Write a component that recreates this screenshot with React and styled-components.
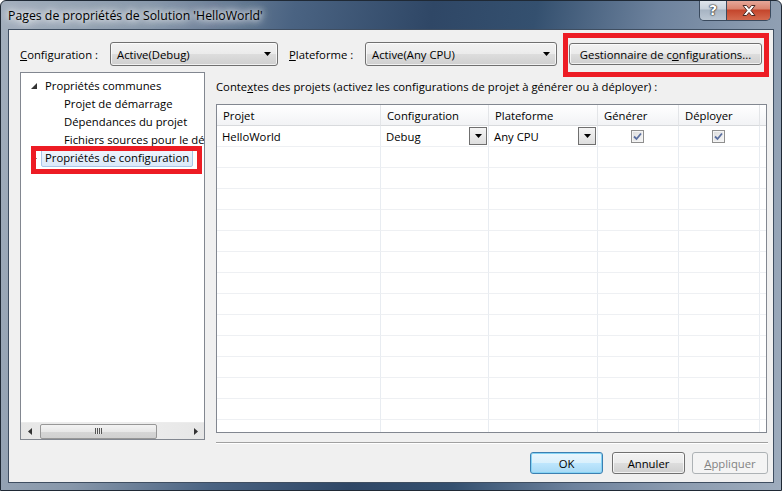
import React from "react";
import styled, { createGlobalStyle } from "styled-components";

const GlobalStyle = createGlobalStyle`
    html, body {
        margin: 0;
        padding: 0;
        background: #ffffff;
    }
    body {
        font-family: "Segoe UI", "Open Sans", "Noto Sans", sans-serif;
        font-size: 11.3px;
        color: #000;
    }
    * {
        box-sizing: border-box;
    }
`;

const rows = Array.from({ length: 15 });

function Caret() {
    return (
        <svg width="7" height="4" viewBox="0 0 7 4">
            <path d="M0 0 H7 L3.5 4 Z" fill="#000" />
        </svg>
    );
}

function Check() {
    return (
        <svg width="9" height="9" viewBox="0 0 9 9">
            <path
                d="M1 4.5 L3.5 7 L8 1.5"
                fill="none"
                stroke="#5b6fa0"
                strokeWidth="1.8"
            />
        </svg>
    );
}

function App() {
    return (
        <>
            <GlobalStyle />
            <Window>
                <TitleBar>
                    <TitleText>Pages de propriétés de Solution 'HelloWorld'</TitleText>
                    <CaptionButtons>
                        <HelpButton>?</HelpButton>
                        <CloseButton>
                            <svg width="14" height="11" viewBox="0 0 14 11">
                                <path
                                    d="M1 0.5 H4.5 L7 3.5 L9.5 0.5 H13 L9 5.5 L13 10.5 H9.5 L7 7.5 L4.5 10.5 H1 L5 5.5 Z"
                                    fill="#fff"
                                    stroke="#4a2a25"
                                    strokeWidth="1"
                                />
                            </svg>
                        </CloseButton>
                    </CaptionButtons>
                </TitleBar>
                <Client>
                    <TopRow>
                        <FieldLabel width={90}>
                            <u>C</u>onfiguration :
                        </FieldLabel>
                        <Combo width={168}>
                            <span>Active(Debug)</span>
                            <Caret />
                        </Combo>
                        <FieldLabel width={76} style={{ marginLeft: 11 }}>
                            <u>P</u>lateforme :
                        </FieldLabel>
                        <Combo width={192}>
                            <span>Active(Any CPU)</span>
                            <Caret />
                        </Combo>
                        <Marked>
                            <PushButton width={193}>
                                Gestionnaire de c<u>o</u>nfigurations...
                            </PushButton>
                            <RedBox $t={-10} $r={-7} $b={-12} $l={-6} />
                        </Marked>
                    </TopRow>
                    <Body>
                        <TreePanel>
                            <TreeList>
                                <TreeRow $indent={20}>
                                    <Expander>
                                        <svg width="6" height="6" viewBox="0 0 6 6">
                                            <path d="M6 0 V6 H0 Z" fill="#333" />
                                        </svg>
                                    </Expander>
                                    <TreeLabel>Propriétés communes</TreeLabel>
                                </TreeRow>
                                <TreeRow $indent={39}>
                                    <TreeLabel>Projet de démarrage</TreeLabel>
                                </TreeRow>
                                <TreeRow $indent={39}>
                                    <TreeLabel>Dépendances du projet</TreeLabel>
                                </TreeRow>
                                <TreeRow $indent={39}>
                                    <TreeLabel>Fichiers sources pour le débogage</TreeLabel>
                                </TreeRow>
                                <TreeRow $indent={20}>
                                    <Dot />
                                    <TreeLabel $selected>Propriétés de configuration</TreeLabel>
                                    <RedBox $t={-3} $r={2} $b={-7} $l={10} />
                                </TreeRow>
                            </TreeList>
                            <HScroll>
                                <ScrollArrow>
                                    <svg width="4" height="7" viewBox="0 0 4 7">
                                        <path d="M4 0 V7 L0 3.5 Z" fill="#333" />
                                    </svg>
                                </ScrollArrow>
                                <Thumb>
                                    <Grip />
                                </Thumb>
                                <ScrollArrow style={{ marginLeft: "auto" }}>
                                    <svg width="4" height="7" viewBox="0 0 4 7">
                                        <path d="M0 0 V7 L4 3.5 Z" fill="#333" />
                                    </svg>
                                </ScrollArrow>
                            </HScroll>
                        </TreePanel>
                        <RightCol>
                            <SectionLabel>
                                Conte<u>x</u>tes des projets (activez les configurations de projet à générer ou à déployer) :
                            </SectionLabel>
                            <Grid>
                                <HeadCell>Projet</HeadCell>
                                <HeadCell>Configuration</HeadCell>
                                <HeadCell>Plateforme</HeadCell>
                                <HeadCell>Générer</HeadCell>
                                <HeadCell>Déployer</HeadCell>
                                <HeadCell $last />

                                <Cell>HelloWorld</Cell>
                                <Cell>
                                    <span>Debug</span>
                                    <DropButton>
                                        <Caret />
                                    </DropButton>
                                </Cell>
                                <Cell>
                                    <span>Any CPU</span>
                                    <DropButton>
                                        <Caret />
                                    </DropButton>
                                </Cell>
                                <Cell $center>
                                    <CheckBox>
                                        <Check />
                                    </CheckBox>
                                </Cell>
                                <Cell $center>
                                    <CheckBox>
                                        <Check />
                                    </CheckBox>
                                </Cell>
                                <Cell $last />

                                {rows.map((_, i) => (
                                    <React.Fragment key={i}>
                                        <Cell />
                                        <Cell />
                                        <Cell />
                                        <Cell />
                                        <Cell />
                                        <Cell $last />
                                    </React.Fragment>
                                ))}
                            </Grid>
                            <Separator />
                            <Footer>
                                <PushButton width={73} $default>
                                    OK
                                </PushButton>
                                <PushButton width={73} style={{ marginLeft: 9 }}>
                                    Annuler
                                </PushButton>
                                <PushButton width={76} $disabled style={{ marginLeft: 7 }}>
                                    <u>A</u>ppliquer
                                </PushButton>
                            </Footer>
                        </RightCol>
                    </Body>
                </Client>
            </Window>
        </>
    );
}

export default App;

const Window = styled.div`
    width: 782px;
    height: 491px;
    display: flex;
    flex-direction: column;
    padding: 0 7px 7px 7px;
    border: 1px solid #1f2935;
    border-radius: 6px 6px 0 0;
    background: linear-gradient(
        100deg,
        #a3afbd 0%,
        #8797aa 18%,
        #4a6382 34%,
        #2f4766 50%,
        #34506f 62%,
        #6d829d 76%,
        #8c9cb0 88%,
        #9eacbd 100%
    );
    overflow: hidden;
`;

const TitleBar = styled.div`
    height: 28px;
    display: flex;
    align-items: flex-start;
`;

const TitleText = styled.div`
    align-self: center;
    font-size: 12.3px;
    color: #000;
    text-shadow: 0 0 6px #fff, 0 0 10px #fff, 0 0 14px rgba(255, 255, 255, 0.9);
    margin-top: 1px;
`;

const CaptionButtons = styled.div`
    margin-left: auto;
    margin-right: 3px;
    margin-top: -1px;
    display: flex;
    border: 1px solid #3a4a5e;
    border-top: none;
    border-radius: 0 0 5px 5px;
    overflow: hidden;
    height: 21px;
`;

const HelpButton = styled.div`
    width: 27px;
    height: 20px;
    display: flex;
    align-items: center;
    justify-content: center;
    border-right: 1px solid #3a4a5e;
    background: linear-gradient(#e3e8ee 0%, #c9d2dd 45%, #a7b4c3 50%, #bcc7d3 100%);
    color: #fff;
    font-family: "DejaVu Sans", sans-serif;
    font-weight: bold;
    font-size: 14px;
    text-shadow: 0 0 1px #222, 0 0 1px #222, 0 0 2px #222;
`;

const CloseButton = styled.div`
    width: 43px;
    height: 20px;
    display: flex;
    align-items: center;
    justify-content: center;
    background: linear-gradient(#e8ab9e 0%, #d9846f 45%, #c4452c 50%, #d46a4f 100%);
`;

const Client = styled.div`
    flex: 1;
    display: flex;
    flex-direction: column;
    background: #f0f0f0;
    border: 1px solid #3f4e61;
    padding: 12px 6px 0 11px;
`;

const TopRow = styled.div`
    display: flex;
    align-items: center;
    height: 24px;
`;

const FieldLabel = styled.div`
    width: ${(props) => props.width}px;
    flex-shrink: 0;
    white-space: nowrap;
`;

const Combo = styled.div`
    width: ${(props) => props.width}px;
    height: 24px;
    flex-shrink: 0;
    display: flex;
    align-items: center;
    justify-content: space-between;
    padding: 0 6px 0 6px;
    border: 1px solid #707070;
    border-radius: 3px;
    background: linear-gradient(#f2f2f2 0%, #ebebeb 50%, #dddddd 51%, #cfcfcf 100%);
    box-shadow: inset 0 0 0 1px rgba(255, 255, 255, 0.7);
`;

const Marked = styled.div`
    position: relative;
    margin-left: 12px;
`;

const RedBox = styled.div`
    position: absolute;
    top: ${(props) => props.$t}px;
    right: ${(props) => props.$r}px;
    bottom: ${(props) => props.$b}px;
    left: ${(props) => props.$l}px;
    border: 5px solid #ed1c24;
    pointer-events: none;
`;

const PushButton = styled.div`
    width: ${(props) => props.width}px;
    height: 22px;
    flex-shrink: 0;
    display: flex;
    align-items: center;
    justify-content: center;
    border-radius: 3px;
    white-space: nowrap;
    border: 1px solid
        ${(props) =>
            props.$default ? "#3c7fb1" : props.$disabled ? "#adb2b5" : "#707070"};
    color: ${(props) => (props.$disabled ? "#838383" : "#000")};
    background: ${(props) =>
        props.$default
            ? "linear-gradient(#eaf6fd 0%, #d9f0fc 50%, #bee6fd 51%, #a7d9f5 100%)"
            : props.$disabled
            ? "#f4f4f4"
            : "linear-gradient(#f2f2f2 0%, #ebebeb 50%, #dddddd 51%, #cfcfcf 100%)"};
    box-shadow: ${(props) =>
        props.$default
            ? "inset 0 0 0 1px #86d4f5"
            : props.$disabled
            ? "none"
            : "inset 0 0 0 1px rgba(255,255,255,0.7)"};
`;

const Body = styled.div`
    display: flex;
    margin-top: 6px;
`;

const TreePanel = styled.div`
    width: 185px;
    height: 368px;
    flex-shrink: 0;
    display: flex;
    flex-direction: column;
    background: #fff;
    border: 1px solid #828790;
`;

const TreeList = styled.div`
    flex: 1;
    padding-top: 4px;
    overflow: hidden;
`;

const TreeRow = styled.div`
    position: relative;
    height: 18px;
    display: flex;
    align-items: center;
    padding-left: ${(props) => props.$indent}px;
    white-space: nowrap;
`;

const Expander = styled.div`
    width: 20px;
    margin-left: -20px;
    display: flex;
    justify-content: flex-start;
    padding-left: 10px;
`;

const Dot = styled.div`
    position: absolute;
    left: 15px;
    top: 9px;
    width: 1px;
    height: 1px;
    background: #888;
`;

const TreeLabel = styled.span`
    height: 18px;
    line-height: 16px;
    padding: 0 3px;
    border: 1px solid ${(props) => (props.$selected ? "#a9c6e8" : "transparent")};
    border-radius: 2px;
    background: ${(props) =>
        props.$selected ? "linear-gradient(#eef5fd, #dbe9f9)" : "transparent"};
`;

const HScroll = styled.div`
    height: 17px;
    display: flex;
    align-items: center;
    background: linear-gradient(90deg, #e6e6e6, #f0f0f0 50%, #e6e6e6);
    border-top: 1px solid #ececec;
`;

const ScrollArrow = styled.div`
    width: 17px;
    height: 17px;
    display: flex;
    align-items: center;
    justify-content: center;
`;

const Thumb = styled.div`
    width: 117px;
    height: 15px;
    margin-left: 2px;
    display: flex;
    align-items: center;
    justify-content: center;
    border: 1px solid #979797;
    border-radius: 2px;
    background: linear-gradient(#f3f3f3 0%, #e8e8e8 50%, #d6d6d6 51%, #d0d0d0 100%);
`;

const Grip = styled.div`
    width: 7px;
    height: 6px;
    background: repeating-linear-gradient(
        90deg,
        #555 0px,
        #555 1px,
        #e8e8e8 1px,
        #e8e8e8 2px
    );
`;

const RightCol = styled.div`
    flex: 1;
    margin-left: 11px;
    display: flex;
    flex-direction: column;
`;

const SectionLabel = styled.div`
    margin-top: 6px;
    height: 18px;
    line-height: 18px;
    white-space: nowrap;
`;

const Grid = styled.div`
    margin-top: 8px;
    margin-right: 5px;
    height: 329px;
    overflow: hidden;
    display: grid;
    grid-template-columns: 164px 108px 109px 81px 81px 1fr;
    grid-auto-rows: 21px;
    background: #fff;
    border: 1px solid #828790;
`;

const HeadCell = styled.div`
    height: 21px;
    display: flex;
    align-items: center;
    padding-left: 6px;
    white-space: nowrap;
    background: linear-gradient(#ffffff, #f2f3f5);
    border-right: ${(props) => (props.$last ? "none" : "1px solid #e3e5e8")};
    border-bottom: 1px solid #d8dadd;
`;

const Cell = styled.div`
    height: 21px;
    display: flex;
    align-items: center;
    justify-content: ${(props) => (props.$center ? "center" : "space-between")};
    padding-left: ${(props) => (props.$center ? "0" : "5px")};
    padding-right: 1px;
    white-space: nowrap;
    border-right: ${(props) => (props.$last ? "none" : "1px solid #e8ecf1")};
    border-bottom: 1px solid #eef0f3;
`;

const DropButton = styled.div`
    width: 18px;
    height: 18px;
    display: flex;
    align-items: center;
    justify-content: center;
    border: 1px solid #6f6f6f;
    background: linear-gradient(#f4f4f4, #dedede);
`;

const CheckBox = styled.div`
    width: 13px;
    height: 13px;
    display: flex;
    align-items: center;
    justify-content: center;
    border: 1px solid #8f8f8f;
    background: linear-gradient(135deg, #dcdcdc, #f7f7f7);
    box-shadow: inset 0 0 0 1px #f4f4f4;
`;

const Separator = styled.div`
    margin-top: 9px;
    margin-right: 4px;
    height: 1px;
    background: #a0a0a0;
    box-shadow: 0 1px 0 #fff;
`;

const Footer = styled.div`
    display: flex;
    justify-content: flex-end;
    margin-top: 9px;
    margin-right: 4px;
`;
